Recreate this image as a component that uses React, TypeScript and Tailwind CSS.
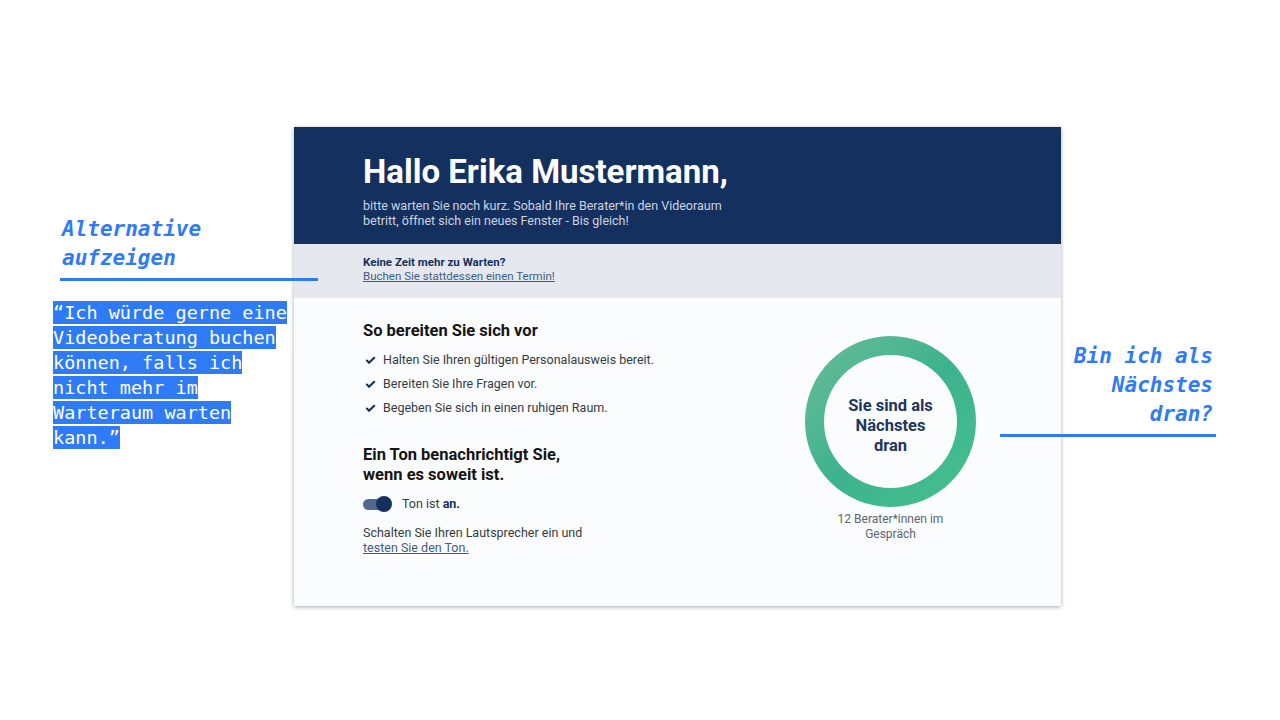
import { Check } from "lucide-react"

const mono = "font-['DejaVu_Sans_Mono',monospace]"

const prepItems = [
    "Halten Sie Ihren gültigen Personalausweis bereit.",
    "Bereiten Sie Ihre Fragen vor.",
    "Begeben Sie sich in einen ruhigen Raum.",
]

const quoteLines = [
    "“Ich würde gerne eine",
    "Videoberatung buchen",
    "können, falls ich",
    "nicht mehr im",
    "Warteraum warten",
    "kann.”",
]

const WaitingRoom = () => {
    return (
        <div className="w-[767px] h-[479px] flex flex-col bg-[#fbfcfd] shadow-[0_1px_4px_rgba(0,0,0,0.35)] font-['Roboto',sans-serif]">
            <div className="h-[117px] bg-[#14305f] pl-[69px] pt-[25px]">
                <h1 className="text-[33px] leading-[40px] font-bold text-white">Hallo Erika Mustermann,</h1>
                <p className="mt-[6px] text-[12.5px] leading-[15px] text-[#cdd4e0] w-[380px]">
                    bitte warten Sie noch kurz. Sobald Ihre Berater*in den Videoraum betritt, öffnet sich ein neues Fenster - Bis gleich!
                </p>
            </div>
            <div className="h-[54px] bg-[#e5e9ef] pl-[69px] pt-[11px] text-[11.5px] leading-[14px]">
                <p className="font-bold text-[#14305f]">Keine Zeit mehr zu Warten?</p>
                <a className="underline text-[#3f5c86]">Buchen Sie stattdessen einen Termin!</a>
            </div>
            <div className="flex-1 flex">
                <div className="w-[470px] pl-[69px] pt-[21px]">
                    <h2 className="text-[16.5px] leading-[24px] font-bold text-[#141414]">So bereiten Sie sich vor</h2>
                    <ul className="mt-[5px] flex flex-col">
                        {prepItems.map((item) => (
                            <li key={item} className="flex items-center h-[24px] text-[12.5px] text-[#333b45]">
                                <Check className="w-[11px] h-[11px] text-[#14305f] mr-[7px] ml-[2px]" strokeWidth={4.5} />
                                {item}
                            </li>
                        ))}
                    </ul>
                    <h2 className="mt-[25px] text-[16.5px] leading-[20px] font-bold text-[#141414]">
                        Ein Ton benachrichtigt Sie,<br />wenn es soweit ist.
                    </h2>
                    <div className="mt-[10px] flex items-center gap-[10px]">
                        <div className="relative w-[29px] h-[16px]">
                            <div className="absolute left-0 top-[3px] w-[26px] h-[11px] rounded-full bg-[#52678d]" />
                            <div className="absolute right-0 top-0 w-[16px] h-[16px] rounded-full bg-[#14305f]" />
                        </div>
                        <span className="text-[12.5px] text-[#333b45]">
                            Ton ist <b className="text-[#14305f]">an.</b>
                        </span>
                    </div>
                    <p className="mt-[11px] text-[12.5px] leading-[15px] text-[#333b45]">
                        Schalten Sie Ihren Lautsprecher ein und<br />
                        <a className="underline text-[#3f5c86]">testen Sie den Ton.</a>
                    </p>
                </div>
                <div className="flex-1 flex flex-col items-center pt-[38px] pr-[44px]">
                    <div className="w-[171px] h-[171px] rounded-full bg-linear-to-br from-[#66bd98] via-[#3db38d] to-[#45c18e] flex items-center justify-center">
                        <div className="w-[133px] h-[133px] rounded-full bg-[#fbfcfd] flex items-center justify-center text-center">
                            <p className="mt-[9px] text-[16.5px] leading-[20px] font-bold text-[#1e3560]">
                                Sie sind als<br />Nächstes<br />dran
                            </p>
                        </div>
                    </div>
                    <p className="mt-[5px] text-center text-[12px] leading-[15px] text-[#5a6577]">
                        12 Berater*innen im<br />Gespräch
                    </p>
                </div>
            </div>
        </div>
    )
}

const App = () => {
    return (
        <div className="relative w-[1280px] h-[720px] bg-white overflow-hidden">
            <div className="pl-[294px] pt-[127px]">
                <WaitingRoom />
            </div>

            <div className={`absolute left-[62px] top-[215px] ${mono} text-[21px] leading-[29px] font-bold italic text-[#2f7bf5]`}>
                Alternative<br />aufzeigen
            </div>
            <div className="absolute left-[60px] top-[278px] w-[258px] h-[3px] bg-[#2f7bf5]" />
            <div className={`absolute left-[53px] top-[301px] flex flex-col gap-[2px] ${mono} text-[18.5px] leading-[23px] text-white`}>
                {quoteLines.map((line) => (
                    <span key={line} className="self-start bg-[#2f7bf5] whitespace-pre">{line}</span>
                ))}
            </div>

            <div className={`absolute right-[67px] top-[342px] text-right ${mono} text-[21px] leading-[29px] font-bold italic text-[#2f7bf5]`}>
                Bin ich als<br />Nächstes<br />dran?
            </div>
            <div className="absolute left-[1000px] top-[434px] w-[216px] h-[3px] bg-[#2f7bf5]" />
        </div>
    )
}

export default App
